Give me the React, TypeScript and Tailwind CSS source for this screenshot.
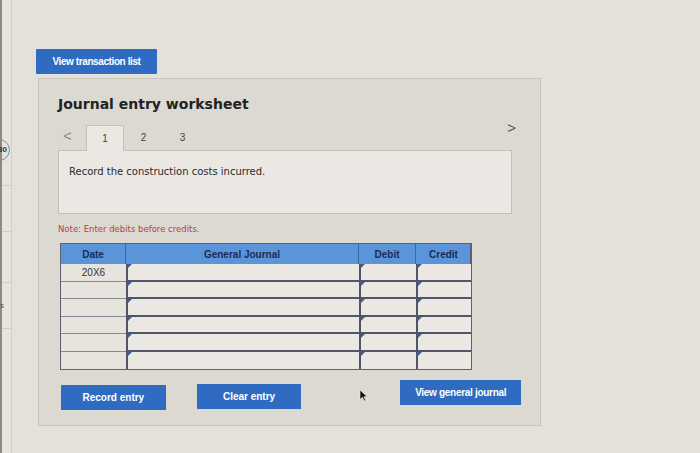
import React from "react";

const Flag = () => (
  <span className="absolute left-0 top-0 w-0 h-0 border-t-[4px] border-t-[#3f5f92] border-r-[4px] border-r-transparent" />
);

export default function App() {
  const rows = ["20X6", "", "", "", "", ""];
  return (
    <div className="w-[700px] h-[453px] bg-[#e4e0da] flex overflow-hidden relative" style={{ fontFamily: '"Liberation Sans", Arial, sans-serif' }}>
      {/* left edge strip + sidebar */}
      <div className="w-[2px] h-full bg-[#8d8984]" />
      <div className="w-[10px] h-full flex flex-col border-r border-[#d3cfc9] bg-[#e7e3dd]">
        <div className="h-[139px]" />
        <div className="-ml-[14px] w-[22px] h-[22px] rounded-full border border-[#8a8680] flex items-center justify-end pr-[2px] text-[8px] font-bold text-[#333]">
          30
        </div>
        <div className="h-[24px]" />
        <div className="h-[47px] border-y border-[#d0ccc6]" />
        <div className="h-[51px] border-b border-[#d0ccc6]" />
        <div className="h-[46px] border-b border-[#d0ccc6] flex items-center text-[8px] text-[#555] leading-none">
          <span className="-ml-[2px]">s</span>
        </div>
      </div>

      {/* main */}
      <div className="pl-[24px] pt-[49px] flex flex-col items-start">
        <button className="w-[121px] h-[25px] bg-[#2e6bc1] text-white text-[10px] font-bold tracking-[-0.4px] rounded-[1px] flex items-center justify-center">
          View transaction list
        </button>

        <div className="mt-[4px] ml-[2px] w-[503px] h-[348px] border border-[#c8c4be] bg-[#dcd8d2] px-[19px] pt-[16px] flex flex-col">
          <div className="text-[14px] leading-[18px] font-bold text-[#222]" style={{ fontFamily: '"DejaVu Sans", Verdana, sans-serif' }}>
            Journal entry worksheet
          </div>

          {/* tabs */}
          <div className="mt-[12px] w-[458px] flex items-end h-[26px] relative z-10">
            <div className="w-[28px] h-[24px] pl-[5px] text-[15px] leading-none text-[#888] flex items-start pt-[1px]">
              &lt;
            </div>
            <div className="w-[38px] h-[26px] border border-b-0 border-[#c3bfb9] bg-[#ebe8e3] flex justify-center pt-[5px] text-[10px] text-[#444]">
              1
            </div>
            <div className="w-[39px] h-[26px] flex justify-center pt-[5px] text-[10px] text-[#444]">2</div>
            <div className="w-[39px] h-[26px] flex justify-center pt-[5px] text-[10px] text-[#444]">3</div>
            <div className="flex-1" />
            <div className="self-start -mt-[5px] text-[15px] leading-none text-[#555]">&gt;</div>
          </div>
          <div className="-mt-px w-[454px] h-[64px] border border-[#c3bfb9] bg-[#ebe8e3] pl-[10px] pt-[14px] text-[10px] leading-[13px] text-[#2a2a2a]" style={{ fontFamily: '"DejaVu Sans", Verdana, sans-serif' }}>
            Record the construction costs incurred.
          </div>

          <div className="mt-[10px] text-[8.5px] leading-[11px] text-[#b5443d]" style={{ fontFamily: '"DejaVu Sans", Verdana, sans-serif' }}>
            Note: Enter debits before credits.
          </div>

          {/* table */}
          <div className="mt-[8px] ml-[2px] w-[412px] border border-[#5d6172] border-r-2">
            <div className="grid grid-cols-[65px_233px_57px_55px] h-[20px] bg-[#5b95d9] text-[10px] font-bold text-[#1c2a58]">
              <div className="flex items-center justify-center border-r border-[#3e66a0]">Date</div>
              <div className="flex items-center justify-center border-r border-[#3e66a0]">General Journal</div>
              <div className="flex items-center justify-center border-r border-[#3e66a0]">Debit</div>
              <div className="flex items-center justify-center">Credit</div>
            </div>
            {rows.map((d, i) => (
              <div key={i} className="grid grid-cols-[65px_233px_57px_55px] h-[17.5px]">
                <div className={`bg-[#e7e4de] flex items-center justify-center text-[10px] text-[#333] ${i < 5 ? "border-b border-[#868892]" : ""}`}>
                  {d}
                </div>
                <div className={`relative bg-[#ebe8e3] border-l-2 border-[#4f5467] ${i < 5 ? "border-b-2" : ""}`}>
                  <Flag />
                </div>
                <div className={`relative bg-[#ebe8e3] border-l-2 border-[#4f5467] ${i < 5 ? "border-b-2" : ""}`}>
                  <Flag />
                </div>
                <div className={`relative bg-[#ebe8e3] border-l-2 border-[#4f5467] ${i < 5 ? "border-b-2" : ""}`}>
                  <Flag />
                </div>
              </div>
            ))}
          </div>

          {/* buttons */}
          <div className="mt-[10px] flex items-start">
            <button className="mt-[5px] ml-[3px] w-[105px] h-[25px] bg-[#2e6bc1] text-white text-[10px] font-bold flex items-center justify-center">
              Record entry
            </button>
            <button className="mt-[4px] ml-[31px] w-[105px] h-[25px] bg-[#2e6bc1] text-white text-[10px] font-bold flex items-center justify-center">
              Clear entry
            </button>
            <button className="ml-[99px] w-[121px] h-[25px] bg-[#2e6bc1] text-white text-[10px] font-bold tracking-[-0.3px] flex items-center justify-center">
              View general journal
            </button>
          </div>
        </div>
      </div>

      {/* mouse cursor */}
      <svg className="absolute left-[359px] top-[389px]" width="9" height="13" viewBox="0 0 9 13">
        <path d="M1 1 L1 10.5 L3.4 8.3 L5.2 12 L6.6 11.3 L4.9 7.8 L8 7.6 Z" fill="#111" stroke="#f3f0ea" strokeWidth="0.6" />
      </svg>
    </div>
  );
}
